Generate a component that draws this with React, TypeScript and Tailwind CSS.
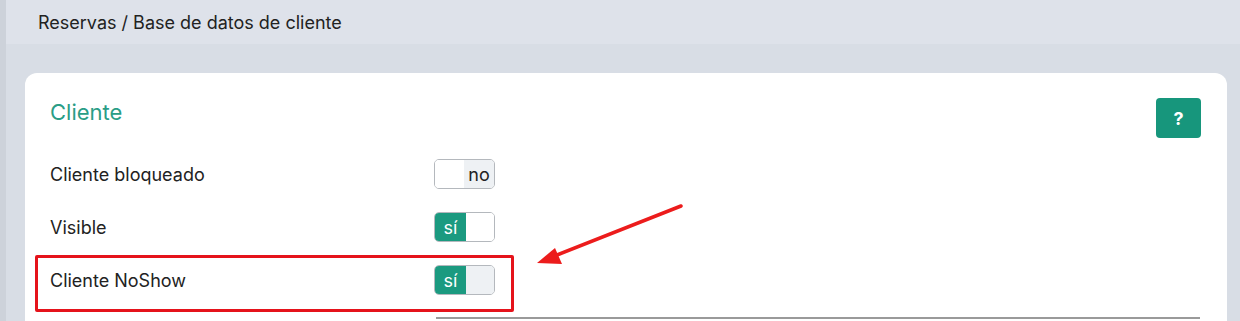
import React from "react";

/* ---------------- Toggle ---------------- */
const Toggle: React.FC<{ on: boolean; dim?: boolean }> = ({ on, dim }) => (
  <div className="flex h-[30px] w-[61px] overflow-hidden rounded-[5px] border border-[#b4b8bd] text-[18px]">
    {on ? (
      <>
        <div className="flex w-[31px] items-center justify-center bg-[#1b9a80] text-white">sí</div>
        <div className={dim ? "flex-1 bg-[#eef1f4]" : "flex-1 bg-white"} />
      </>
    ) : (
      <>
        <div className="w-[29px] bg-white" />
        <div className="flex flex-1 items-center justify-center bg-[#eef1f4] text-[#222]">no</div>
      </>
    )}
  </div>
);

const rows = [
  { label: "Cliente bloqueado", on: false },
  { label: "Visible", on: true },
  { label: "Cliente NoShow", on: true, dim: true },
];

const App: React.FC = () => {
  return (
    <div
      className="relative flex h-[321px] w-[1240px] overflow-hidden bg-[#d8dde5] text-[#222]"
      style={{ fontFamily: "Inter, 'Liberation Sans', sans-serif" }}
    >
      {/* left edge strip */}
      <div className="w-[6px] shrink-0 bg-[#cdd2da]" />

      <div className="flex min-h-0 flex-1 flex-col">
        {/* breadcrumb */}
        <div className="flex h-[44px] shrink-0 items-center bg-[#dee2ea] pl-[32px] text-[18px]">
          Reservas / Base de datos de cliente
        </div>

        {/* card */}
        <div className="relative ml-[19px] mt-[29px] w-[1202px] shrink-0 rounded-t-[12px] bg-white pb-[20px] pl-[25px] pr-[26px] pt-[24px]">
          <div className="flex items-start justify-between">
            <h2 className="pt-[1px] text-[22px] leading-[28px] text-[#2a9d86]">Cliente</h2>
            <button className="mt-[1px] flex h-[40px] w-[45px] items-center justify-center rounded-[4px] bg-[#17967c] text-[18px] font-bold text-white">
              ?
            </button>
          </div>

          <div className="mt-[21px] flex flex-col gap-[23px]">
            {rows.map((r) => (
              <div key={r.label} className="flex h-[30px] items-center">
                <span className="w-[384px] text-[18px]">{r.label}</span>
                <Toggle on={r.on} dim={r.dim} />
              </div>
            ))}
          </div>

          {/* next field (cut off) */}
          <div className="ml-[386px] mr-[1px] mt-[22px] h-[10px] border-t-2 border-[#9a9a9a]" />

          {/* highlight box */}
          <div className="pointer-events-none absolute left-[10px] top-[182px] h-[57px] w-[479px] rounded-[2px] border-[3px] border-[#e5131b]" />
        </div>
      </div>

      {/* annotation arrow */}
      <svg className="pointer-events-none absolute left-0 top-0" width="1240" height="321">
        <line x1="681" y1="206" x2="552" y2="257" stroke="#ec1c1c" strokeWidth="3.5" strokeLinecap="round" />
        <polygon points="537,263 555,248 562,264" fill="#ec1c1c" />
      </svg>
    </div>
  );
};

export default App;
